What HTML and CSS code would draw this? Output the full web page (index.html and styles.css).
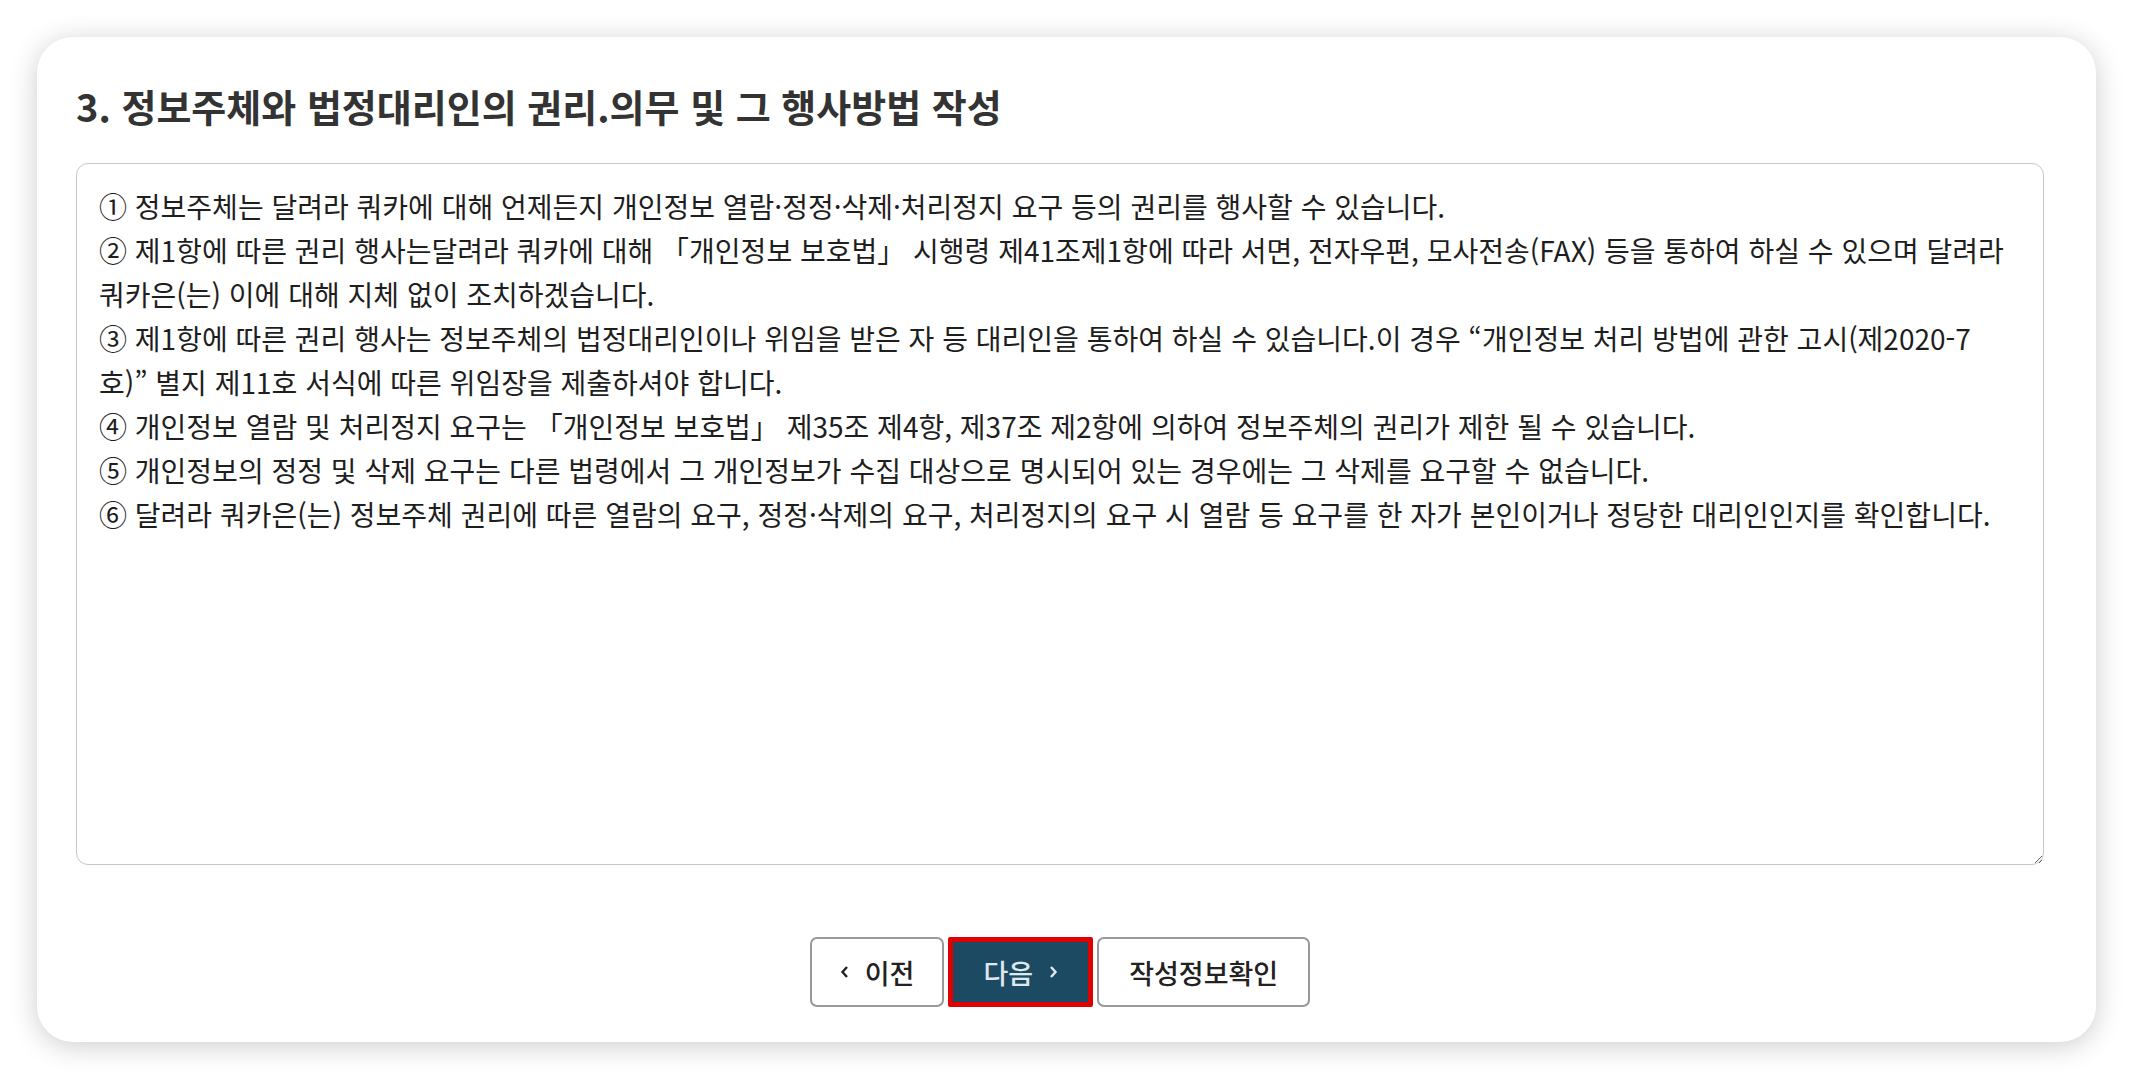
FILE: index.html
```html
<!DOCTYPE html>
<html lang="ko">
<head>
    <meta charset="UTF-8">
    <meta name="viewport" content="width=device-width, initial-scale=1.0">
    <title>개인정보 처리방침 작성</title>
    <link rel="stylesheet" href="styles.css">
</head>
<body>
    <div class="card">
        <h2 class="step-title">3. 정보주체와 법정대리인의 권리.의무 및 그 행사방법 작성</h2>

        <textarea class="policy-text" readonly>
① 정보주체는 달려라 쿼카에 대해 언제든지 개인정보 열람·정정·삭제·처리정지 요구 등의 권리를 행사할 수 있습니다.
② 제1항에 따른 권리 행사는달려라 쿼카에 대해 「개인정보 보호법」 시행령 제41조제1항에 따라 서면, 전자우편, 모사전송(FAX) 등을 통하여 하실 수 있으며 달려라
쿼카은(는) 이에 대해 지체 없이 조치하겠습니다.
③ 제1항에 따른 권리 행사는 정보주체의 법정대리인이나 위임을 받은 자 등 대리인을 통하여 하실 수 있습니다.이 경우 “개인정보 처리 방법에 관한 고시(제2020-7
호)” 별지 제11호 서식에 따른 위임장을 제출하셔야 합니다.
④ 개인정보 열람 및 처리정지 요구는 「개인정보 보호법」 제35조 제4항, 제37조 제2항에 의하여 정보주체의 권리가 제한 될 수 있습니다.
⑤ 개인정보의 정정 및 삭제 요구는 다른 법령에서 그 개인정보가 수집 대상으로 명시되어 있는 경우에는 그 삭제를 요구할 수 없습니다.
⑥ 달려라 쿼카은(는) 정보주체 권리에 따른 열람의 요구, 정정·삭제의 요구, 처리정지의 요구 시 열람 등 요구를 한 자가 본인이거나 정당한 대리인인지를 확인합니다.</textarea>

        <div class="button-row">
            <button class="btn btn-prev">
                <svg class="chev" width="9" height="14" viewBox="0 0 9 14"><path d="M7 2 L2.5 7 L7 12" fill="none" stroke="currentColor" stroke-width="2.4"/></svg>
                이전
            </button>
            <button class="btn btn-next">
                다음
                <svg class="chev" width="9" height="14" viewBox="0 0 9 14"><path d="M2 2 L6.5 7 L2 12" fill="none" stroke="currentColor" stroke-width="2.4"/></svg>
            </button>
            <button class="btn btn-wide">작성정보확인</button>
        </div>
    </div>
</body>
</html>
```

FILE: styles.css
```css
* {
    box-sizing: border-box;
}
html, body {
    height: 100%;
}
body {
    font-family: "Noto Sans CJK KR", "Noto Sans", sans-serif;
    margin: 0;
    padding: 37px 36px 36px 37px;
    background-color: #ffffff;
    display: flex;
    flex-direction: column;
}
.card {
    flex: 1;
    background: #fff;
    border-radius: 36px;
    box-shadow: 0 4px 28px rgba(0, 0, 0, 0.2);
    padding: 40px 52px 35px 39px;
    display: flex;
    flex-direction: column;
}
.step-title {
    margin: 8px 0 36px;
    font-size: 38px;
    line-height: 42px;
    font-weight: 700;
    color: #333;
}
.policy-text {
    flex: 1;
    width: 100%;
    font-family: inherit;
    font-size: 28px;
    line-height: 44px;
    color: #1e1e1e;
    padding: 20px 22px;
    border: 1.5px solid #c6c6c6;
    border-radius: 12px;
    white-space: pre;
    overflow: hidden;
    resize: both;
    outline: none;
}
.button-row {
    margin-top: 72px;
    display: flex;
    justify-content: center;
    gap: 4px;
}
.btn {
    height: 70px;
    padding: 0 30px;
    background: #fff;
    color: #222;
    border: 2px solid #999;
    border-radius: 7px;
    font-family: inherit;
    font-size: 27px;
    font-weight: 500;
    display: flex;
    align-items: center;
    gap: 16px;
    cursor: pointer;
}
.btn-prev {
    padding: 0 28px;
}
.btn-next {
    background-color: #1c4a62;
    color: #dfe8ee;
    border: 5px solid #e00000;
    border-radius: 2px;
    padding: 0 30px;
}
.btn-wide {
    padding: 0 30px;
}
.chev {
    display: block;
}
```
